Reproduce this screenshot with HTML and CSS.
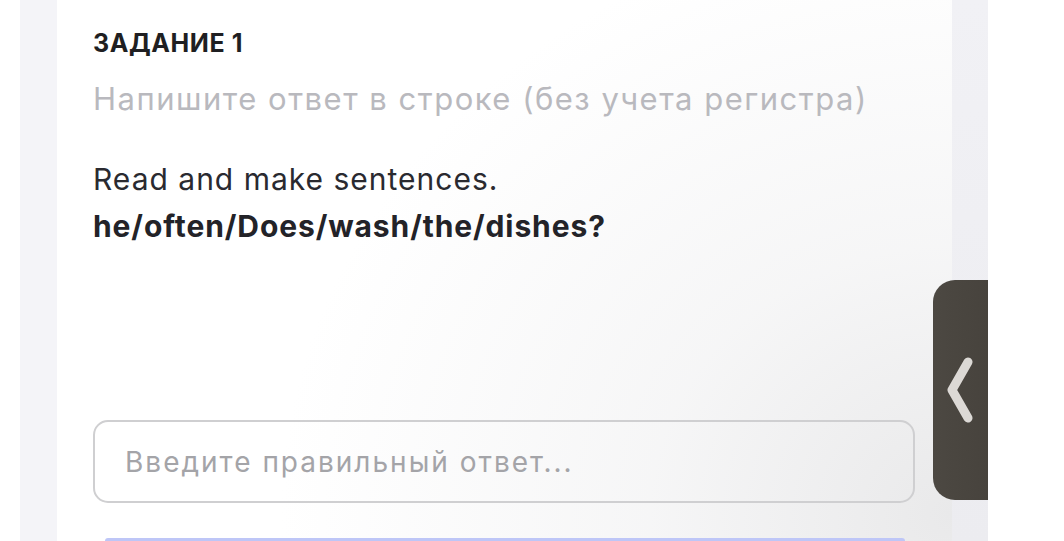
FILE: index.html
```html
<!DOCTYPE html>
<html lang="ru">
<head>
<meta charset="utf-8">
<title>Задание 1</title>
<link rel="stylesheet" href="styles.css">
</head>
<body>
<div class="page">
  <div class="strip strip-left"></div>
  <main class="card">
    <h2 class="task-title">ЗАДАНИЕ 1</h2>
    <p class="task-hint">Напишите ответ в строке (без учета регистра)</p>
    <div class="task-body">
      <p class="task-text">Read and make sentences.</p>
      <p class="task-words">he/often/Does/wash/the/dishes?</p>
    </div>
    <div class="answer">
      <input class="answer-input" type="text" placeholder="Введите правильный ответ...">
    </div>
    <div class="submit"></div>
  </main>
  <div class="strip strip-right"></div>
  <button class="side-tab" aria-label="Открыть">
    <svg width="28" height="68" viewBox="0 0 28 68"><path d="M21 6 L5 34 L21 62" fill="none" stroke="#dcd9d5" stroke-width="9" stroke-linecap="round" stroke-linejoin="round"/></svg>
  </button>
</div>
</body>
</html>
```
FILE: styles.css
```css
html, body {
  margin: 0;
  padding: 0;
  background: #ffffff;
  height: 100%;
  overflow: hidden;
}
body {
  font-family: Inter, "Noto Sans", sans-serif;
}
.page {
  position: relative;
  display: flex;
  height: 541px;
  padding-left: 20px;
}
.strip {
  flex: none;
  width: 37px;
}
.strip-left {
  background: #f4f4f8;
}
.strip-right {
  width: 36px;
  background: linear-gradient(180deg, #f1f1f5 0%, #ececf0 100%);
}
.card {
  flex: none;
  width: 859px;
  padding: 27px 0 0 36px;
  display: flex;
  flex-direction: column;
  background:
    radial-gradient(ellipse 75% 110% at 100% 95%, #e9e9ea 0%, rgba(240,240,241,0.6) 45%, rgba(255,255,255,0) 100%),
    #ffffff;
}
.task-title {
  margin: 0;
  font-size: 25px;
  font-weight: 700;
  line-height: 32px;
  color: #1f1f22;
  letter-spacing: 0.6px;
}
.task-hint {
  margin: 21px 0 0;
  font-size: 31px;
  line-height: 38px;
  color: #b9b9be;
  letter-spacing: 1.5px;
}
.task-body {
  margin-top: 38px;
}
.task-text, .task-words {
  margin: 0;
  font-size: 30px;
  line-height: 47px;
  color: #2a2a30;
  letter-spacing: 1px;
}
.task-words {
  font-weight: 700;
  color: #232328;
  letter-spacing: 0.9px;
}
.answer {
  margin-top: 170px;
  width: 822px;
}
.answer-input {
  box-sizing: border-box;
  width: 100%;
  height: 83px;
  border: 2px solid #cfcfd1;
  border-radius: 15px;
  background: transparent;
  padding: 0 30px;
  font-family: inherit;
  font-size: 28px;
  letter-spacing: 2px;
  color: #222;
  outline: none;
}
.answer-input::placeholder {
  color: #a4a4a8;
}
.submit {
  margin: 35px 0 0 12px;
  width: 800px;
  height: 40px;
  border-radius: 16px 16px 0 0;
  background: #bec6f7;
}
.side-tab {
  position: absolute;
  left: 933px;
  top: 280px;
  width: 55px;
  height: 220px;
  border: 0;
  padding: 0;
  border-radius: 22px 0 0 22px;
  background: linear-gradient(90deg, #4c4842 0%, #47433d 100%);
  display: flex;
  align-items: center;
  justify-content: flex-start;
  cursor: pointer;
}
.side-tab svg {
  display: block;
  margin-left: 14px;
  margin-top: 0;
}
```
